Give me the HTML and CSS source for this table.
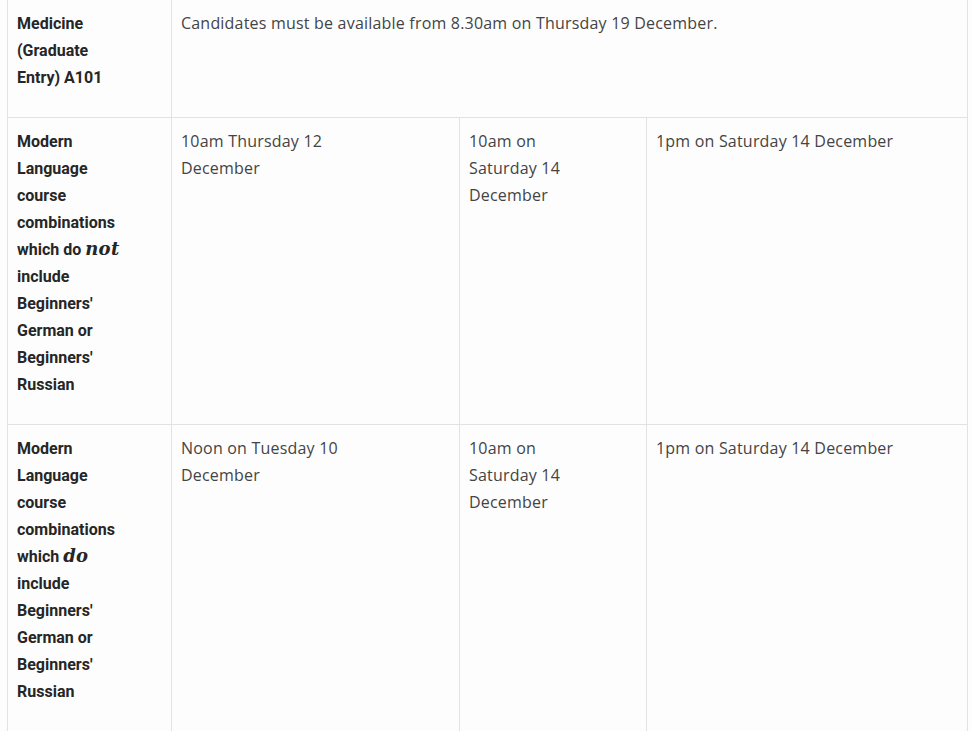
FILE: index.html
```html
<!DOCTYPE html>
<html lang="en">
<head>
<meta charset="utf-8">
<title>Interview dates</title>
<link rel="stylesheet" href="styles.css">
</head>
<body>
<table class="dates">
  <colgroup>
    <col class="c1"><col class="c2"><col class="c3"><col class="c4">
  </colgroup>
  <tbody>
    <tr>
      <th class="course">Medicine (Graduate Entry) A101</th>
      <td class="wide" colspan="3">Candidates must be available from 8.30am on Thursday 19 December.</td>
    </tr>
    <tr>
      <th class="course">Modern Language course combinations which do <em>not</em> include Beginners' German or Beginners' Russian</th>
      <td class="d1">10am Thursday 12 December</td>
      <td class="d2">10am on Saturday 14 December</td>
      <td class="d3">1pm on Saturday 14 December</td>
    </tr>
    <tr>
      <th class="course">Modern Language course combinations which <em>do</em> include Beginners' German or Beginners' Russian</th>
      <td class="d1">Noon on Tuesday 10 December</td>
      <td class="d2">10am on Saturday 14 December</td>
      <td class="d3">1pm on Saturday 14 December</td>
    </tr>
  </tbody>
</table>
</body>
</html>
```

FILE: styles.css
```css
html, body {
  margin: 0;
  background: #fdfdfd;
}
body {
  padding: 0 5px 0 7px;
}
.dates {
  margin-top: -1px;
  width: 960px;
  table-layout: fixed;
  border-collapse: collapse;
  font-family: "Open Sans", "Liberation Sans", sans-serif;
  font-size: 16px;
  letter-spacing: 0.2px;
  line-height: 27px;
  color: #444;
}
.c1 { width: 164px; }
.c2 { width: 288px; }
.c3 { width: 187px; }
.c4 { width: 321px; }
.dates th, .dates td {
  border: 1px solid #e2e2e2;
  padding: 10px 10px 26px 9px;
  vertical-align: top;
  text-align: left;
}
.dates .course {
  font-family: Roboto, "Open Sans", sans-serif;
  font-weight: 700;
  font-size: 16px;
  letter-spacing: 0;
  color: #262626;
  padding-right: 42px;
}
.dates .d1 { padding-right: 80px; }
.dates .d2 { padding-right: 70px; }
.dates em {
  font-family: "DejaVu Serif", "Liberation Serif", serif;
  font-style: italic;
  font-weight: 700;
  font-size: 18px;
  letter-spacing: 0.3px;
  line-height: 0;
  color: #262626;
}
```
